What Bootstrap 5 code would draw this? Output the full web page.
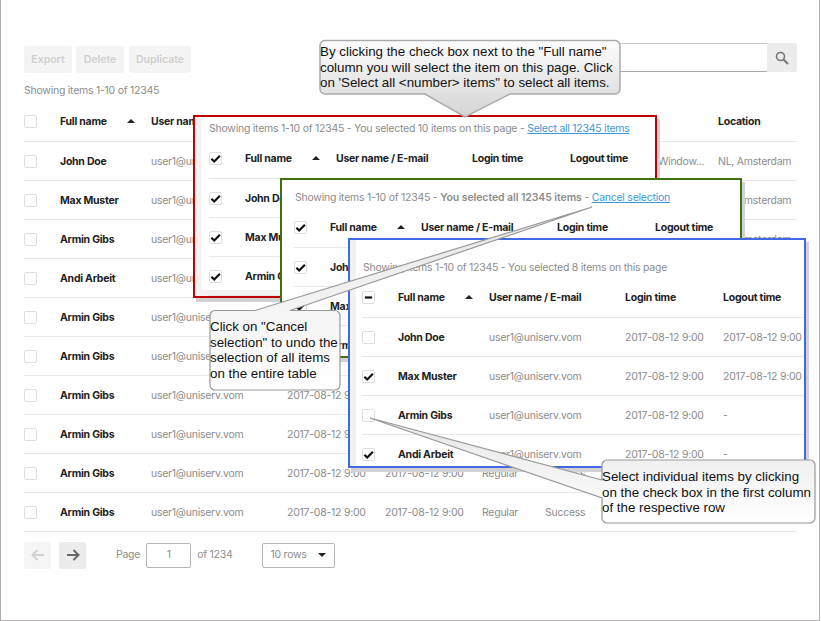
<!DOCTYPE html>
<html lang="en">
  <head>
    <meta charset="UTF-8" />
    <title>Table selection help</title>
    <link href="https://cdn.jsdelivr.net/npm/bootstrap@5.3.0/dist/css/bootstrap.min.css" rel="stylesheet" />
    <style>
      html, body { height: 621px; overflow: hidden; background: #fff; }
      body { font-family: Inter, "Liberation Sans", sans-serif; font-size: 10.5px; letter-spacing: -.25px; color: #8c8c8c; }
      .frame { position: relative; width: 820px; height: 621px; border-left: 1px solid #b5b1b1; border-right: 1px solid #b5b1b1; border-bottom: 1px solid #b5b1b1; padding: 46px 23px 0 23px; overflow: hidden; }
      .tool-btn { width: 48px; height: 27px; background: #f4f4f4; color: #cfcfcf; font-weight: 600; border-radius: 2px; letter-spacing: 0; }
      .tool-btn.wide { width: 62px; margin-left: 1px; }
      .search-box { position: absolute; left: 400px; top: 43px; width: 366px; height: 29px; border-top: 1px solid #c8c8c8; border-bottom: 1px solid #a8a8a8; }
      .search-btn { position: absolute; left: 766px; top: 43px; width: 30px; height: 29px; background: #ececec; border-radius: 0 2px 2px 0; }
      .count { height: 18px; margin-top: 9px; line-height: 18px; }
      .grid { table-layout: fixed; border-collapse: collapse; width: 773px; margin: 3px 0 0; }
      .grid th, .grid td { padding: 0; height: 39px; border-bottom: 1px solid #e8e8e8; white-space: nowrap; overflow: hidden; }
      .grid th { height: 38px; color: #222; font-weight: 700; }
      .grid td { color: #8c8c8c; padding-top: 2px; }
      .grid td.who { color: #222; font-weight: 700; }
      .grid .c-box { width: 36px; } .grid .c-name { width: 91px; } .grid .c-user { width: 136px; }
      .grid .c-login { width: 98px; } .grid .c-logout { width: 97px; } .grid .c-type { width: 63px; }
      .grid .c-stat { width: 113px; } .grid .c-dev { width: 60px; } .grid .c-loc { width: 79px; }
      .tick { display: block; width: 13px; height: 13px; border: 1px solid #dedede; border-radius: 2px; background: #fff; }
      .tick svg { display: block; width: 11px; height: 11px; }
      .tick path { fill: none; stroke: #111; stroke-width: 2.4; }
      .sort-up { display: inline-block; margin-left: 20px; vertical-align: 2px; border-left: 4px solid transparent; border-right: 4px solid transparent; border-bottom: 4px solid #222; }
      .pager { margin-top: 10px; height: 27px; }
      .arrow-btn { width: 27px; height: 27px; background: #f5f5f5; border-radius: 2px; }
      .arrow-btn.on { background: #ececec; margin-left: 8px; }
      .page-label { margin-left: 30px; }
      .page-input { width: 45px; height: 25px; border: 1px solid #b4b4b4; border-radius: 2px; margin: 0 6px 0 6px; }
      .rows-pick { width: 73px; height: 25px; border: 1px solid #b4b4b4; border-radius: 2px; padding: 0 8px; margin-left: 29px; }
      .caret-down { border-left: 4px solid transparent; border-right: 4px solid transparent; border-top: 4px solid #222; }
      .shot { position: absolute; background: #fff; overflow: hidden; padding-left: 14px; border: 2px solid; }
      .shot .grid { width: 458px; margin: 0; }
      .shot .grid th { height: 41px; padding-top: 3px; }
      .shot .info { white-space: nowrap; height: 16px; line-height: 16px; }
      .shot .info b { letter-spacing: -.08px; font-weight: 600; }
      .shot a { color: #3b97d8; }
      .shot-red { left: 192px; top: 115px; width: 464px; height: 183px; border-color: #c00000; box-shadow: inset 6px -6px 0 #f2f2f2, 3px 4px 0 #d2d2d2; padding-top: 4px; }
      .shot-green { left: 279px; top: 178px; width: 462px; height: 180px; border-color: #3f7012; box-shadow: 3px 4px 0 #d2d2d2; padding-top: 10px; padding-left: 13px; }
      .shot-blue { left: 347px; top: 238px; width: 458px; height: 230px; border-color: #4169e1; box-shadow: inset 6px 0 0 #f2f2f2, 3px 4px 0 #d2d2d2; padding-top: 20px; padding-left: 13px; }
      .shot-green .grid, .shot-blue .grid { margin-left: -1px; }
      .notes { position: absolute; left: -1px; top: 0; width: 821px; height: 621px; pointer-events: none; }
      .note { position: absolute; font-family: "Liberation Sans", sans-serif; font-size: 13.33px; line-height: 15.5px; letter-spacing: 0; color: #111; white-space: nowrap; }
      .note-all { left: 319px; top: 44px; }
      .note-cancel { left: 209px; top: 319px; }
      .note-row { left: 601px; top: 469px; }
    </style>
  </head>
  <body>
    <div class="frame">
      <div class="d-flex gap-1">
        <div class="tool-btn d-flex align-items-center justify-content-center">Export</div>
        <div class="tool-btn d-flex align-items-center justify-content-center">Delete</div>
        <div class="tool-btn wide d-flex align-items-center justify-content-center">Duplicate</div>
      </div>
      <div class="search-box"></div>
      <div class="search-btn d-flex align-items-center justify-content-center">
        <svg width="14" height="14" viewBox="0 0 14 14" fill="none" stroke="#777" stroke-width="1.6"><circle cx="5.5" cy="5.5" r="4"/><path d="M8.5 8.5 13 13" stroke-width="2"/></svg>
      </div>
      <div class="count">Showing items 1-10 of 12345</div>

      <table class="grid">
        <tr><th class="c-box"><span class="tick"></span></th><th class="c-name">Full name<span class="sort-up"></span></th><th class="c-user">User name / E-mail</th><th class="c-login">Login time</th><th class="c-logout">Logout time</th><th class="c-type">Type</th><th class="c-stat">Status</th><th class="c-dev"></th><th class="c-loc">Location</th></tr>
        <tr><td><span class="tick"></span></td><td class="who">John Doe</td><td>user1@uniserv.vom</td><td>2017-08-12 9:00</td><td>2017-08-12 9:00</td><td>Regular</td><td>Success</td><td>Window...</td><td>NL, Amsterdam</td></tr>
        <tr><td><span class="tick"></span></td><td class="who">Max Muster</td><td>user1@uniserv.vom</td><td>2017-08-12 9:00</td><td>2017-08-12 9:00</td><td>Regular</td><td>Success</td><td>Window...</td><td>NL, Amsterdam</td></tr>
        <tr><td><span class="tick"></span></td><td class="who">Armin Gibs</td><td>user1@uniserv.vom</td><td>2017-08-12 9:00</td><td>2017-08-12 9:00</td><td>Regular</td><td>Success</td><td>Window...</td><td>NL, Amsterdam</td></tr>
        <tr><td><span class="tick"></span></td><td class="who">Andi Arbeit</td><td>user1@uniserv.vom</td><td>2017-08-12 9:00</td><td>2017-08-12 9:00</td><td>Regular</td><td>Success</td><td>Window...</td><td>NL, Amsterdam</td></tr>
        <tr><td><span class="tick"></span></td><td class="who">Armin Gibs</td><td>user1@uniserv.vom</td><td>2017-08-12 9:00</td><td>2017-08-12 9:00</td><td>Regular</td><td>Success</td><td>Window...</td><td>NL, Amsterdam</td></tr>
        <tr><td><span class="tick"></span></td><td class="who">Armin Gibs</td><td>user1@uniserv.vom</td><td>2017-08-12 9:00</td><td>2017-08-12 9:00</td><td>Regular</td><td>Success</td><td>Window...</td><td>NL, Amsterdam</td></tr>
        <tr><td><span class="tick"></span></td><td class="who">Armin Gibs</td><td>user1@uniserv.vom</td><td>2017-08-12 9:00</td><td>2017-08-12 9:00</td><td>Regular</td><td>Success</td><td>Window...</td><td>NL, Amsterdam</td></tr>
        <tr><td><span class="tick"></span></td><td class="who">Armin Gibs</td><td>user1@uniserv.vom</td><td>2017-08-12 9:00</td><td>2017-08-12 9:00</td><td>Regular</td><td>Success</td><td>Window...</td><td>NL, Amsterdam</td></tr>
        <tr><td><span class="tick"></span></td><td class="who">Armin Gibs</td><td>user1@uniserv.vom</td><td>2017-08-12 9:00</td><td>2017-08-12 9:00</td><td>Regular</td><td>Success</td><td>Window...</td><td>NL, Amsterdam</td></tr>
        <tr><td><span class="tick"></span></td><td class="who">Armin Gibs</td><td>user1@uniserv.vom</td><td>2017-08-12 9:00</td><td>2017-08-12 9:00</td><td>Regular</td><td>Success</td><td>Window...</td><td>NL, Amsterdam</td></tr>
      </table>

      <div class="pager d-flex align-items-center">
        <div class="arrow-btn d-flex align-items-center justify-content-center">
          <svg width="14" height="12" viewBox="0 0 14 12" fill="none" stroke="#d2d2d2" stroke-width="2"><path d="M13 6H2M6.5 1 1.5 6l5 5"/></svg>
        </div>
        <div class="arrow-btn on d-flex align-items-center justify-content-center">
          <svg width="14" height="12" viewBox="0 0 14 12" fill="none" stroke="#666" stroke-width="2"><path d="M1 6h11M7.5 1l5 5-5 5"/></svg>
        </div>
        <span class="page-label">Page</span>
        <div class="page-input d-flex align-items-center justify-content-center">1</div>
        <span>of 1234</span>
        <div class="rows-pick d-flex align-items-center justify-content-between">10 rows<span class="caret-down"></span></div>
      </div>

      <!-- page selection -->
      <div class="shot shot-red">
        <div class="info">Showing items 1-10 of 12345 - You selected 10 items on this page - <a href="#">Select all 12345 items</a></div>
        <table class="grid">
          <tr><th class="c-box"><span class="tick"><svg viewBox="0 0 12 12"><path d="M1.5 6.2 4.6 9.2 10.8 3"/></svg></span></th><th class="c-name">Full name<span class="sort-up"></span></th><th class="c-user">User name / E-mail</th><th class="c-login">Login time</th><th class="c-logout">Logout time</th></tr>
          <tr><td><span class="tick"><svg viewBox="0 0 12 12"><path d="M1.5 6.2 4.6 9.2 10.8 3"/></svg></span></td><td class="who">John Doe</td><td>user1@uniserv.vom</td><td>2017-08-12 9:00</td><td>2017-08-12 9:00</td></tr>
          <tr><td><span class="tick"><svg viewBox="0 0 12 12"><path d="M1.5 6.2 4.6 9.2 10.8 3"/></svg></span></td><td class="who">Max Muster</td><td>user1@uniserv.vom</td><td>2017-08-12 9:00</td><td>2017-08-12 9:00</td></tr>
          <tr><td><span class="tick"><svg viewBox="0 0 12 12"><path d="M1.5 6.2 4.6 9.2 10.8 3"/></svg></span></td><td class="who">Armin Gibs</td><td>user1@uniserv.vom</td><td>2017-08-12 9:00</td><td>2017-08-12 9:00</td></tr>
        </table>
      </div>

      <!-- all rows selection -->
      <div class="shot shot-green">
        <div class="info">Showing items 1-10 of 12345 - <b>You selected all 12345 items</b> - <a href="#">Cancel selection</a></div>
        <table class="grid">
          <tr><th class="c-box"><span class="tick"><svg viewBox="0 0 12 12"><path d="M1.5 6.2 4.6 9.2 10.8 3"/></svg></span></th><th class="c-name">Full name<span class="sort-up"></span></th><th class="c-user">User name / E-mail</th><th class="c-login">Login time</th><th class="c-logout">Logout time</th></tr>
          <tr><td><span class="tick"><svg viewBox="0 0 12 12"><path d="M1.5 6.2 4.6 9.2 10.8 3"/></svg></span></td><td class="who">John Doe</td><td>user1@uniserv.vom</td><td>2017-08-12 9:00</td><td>2017-08-12 9:00</td></tr>
          <tr><td><span class="tick"><svg viewBox="0 0 12 12"><path d="M1.5 6.2 4.6 9.2 10.8 3"/></svg></span></td><td class="who">Max Muster</td><td>user1@uniserv.vom</td><td>2017-08-12 9:00</td><td>2017-08-12 9:00</td></tr>
          <tr><td><span class="tick"><svg viewBox="0 0 12 12"><path d="M1.5 6.2 4.6 9.2 10.8 3"/></svg></span></td><td class="who">Armin Gibs</td><td>user1@uniserv.vom</td><td>2017-08-12 9:00</td><td>2017-08-12 9:00</td></tr>
        </table>
      </div>

      <!-- partial selection -->
      <div class="shot shot-blue">
        <div class="info">Showing items 1-10 of 12345 - You selected 8 items on this page</div>
        <table class="grid">
          <tr><th class="c-box"><span class="tick"><svg viewBox="0 0 12 12"><path d="M2 6h8"/></svg></span></th><th class="c-name">Full name<span class="sort-up"></span></th><th class="c-user">User name / E-mail</th><th class="c-login">Login time</th><th class="c-logout">Logout time</th></tr>
          <tr><td><span class="tick"></span></td><td class="who">John Doe</td><td>user1@uniserv.vom</td><td>2017-08-12 9:00</td><td>2017-08-12 9:00</td></tr>
          <tr><td><span class="tick"><svg viewBox="0 0 12 12"><path d="M1.5 6.2 4.6 9.2 10.8 3"/></svg></span></td><td class="who">Max Muster</td><td>user1@uniserv.vom</td><td>2017-08-12 9:00</td><td>2017-08-12 9:00</td></tr>
          <tr><td><span class="tick"></span></td><td class="who">Armin Gibs</td><td>user1@uniserv.vom</td><td>2017-08-12 9:00</td><td>-</td></tr>
          <tr><td><span class="tick"><svg viewBox="0 0 12 12"><path d="M1.5 6.2 4.6 9.2 10.8 3"/></svg></span></td><td class="who">Andi Arbeit</td><td>user1@uniserv.vom</td><td>2017-08-12 9:00</td><td>-</td></tr>
        </table>
      </div>

      <!-- callouts -->
      <svg class="notes" viewBox="0 0 821 621">
        <defs>
          <linearGradient id="fillDown" x1="0" y1="0" x2="0" y2="1"><stop offset="0" stop-color="#fdfdfd"/><stop offset="1" stop-color="#d4d4d4"/></linearGradient>
          <linearGradient id="fillUp" x1="0" y1="0" x2="0" y2="1"><stop offset="0" stop-color="#e6e6e6"/><stop offset="1" stop-color="#ffffff"/></linearGradient>
        </defs>
        <path d="M325 40.5H615a5 5 0 0 1 5 5V89a5 5 0 0 1-5 5H510L465 117 425 94H325a5 5 0 0 1-5-5V45.5a5 5 0 0 1 5-5Z" fill="url(#fillDown)" stroke="#aaa" stroke-width="1.5"/>
        <path d="M215 310.5H255L592 207 290 310.5H335a5 5 0 0 1 5 5V385a5 5 0 0 1-5 5H215a5 5 0 0 1-5-5V315.5a5 5 0 0 1 5-5Z" fill="url(#fillUp)" stroke="#999" stroke-width="1.2"/>
        <path d="M607 460H810a5 5 0 0 1 5 5V518a5 5 0 0 1-5 5H607a5 5 0 0 1-5-5V498L370 418 602 480V465a5 5 0 0 1 5-5Z" fill="url(#fillUp)" stroke="#999" stroke-width="1.2"/>
      </svg>
      <div class="note note-all">By clicking the check box next to the "Full name"<br>column you will select the item on this page. Click<br>on 'Select all &lt;number&gt; items" to select all items.</div>
      <div class="note note-cancel">Click on "Cancel<br>selection" to undo the<br>selection of all items<br>on the entire table</div>
      <div class="note note-row">Select individual items by clicking<br>on the check box in the first column<br>of the respective row</div>
    </div>
    <script src="https://cdn.jsdelivr.net/npm/bootstrap@5.3.0/dist/js/bootstrap.bundle.min.js"></script>
  </body>
</html>
